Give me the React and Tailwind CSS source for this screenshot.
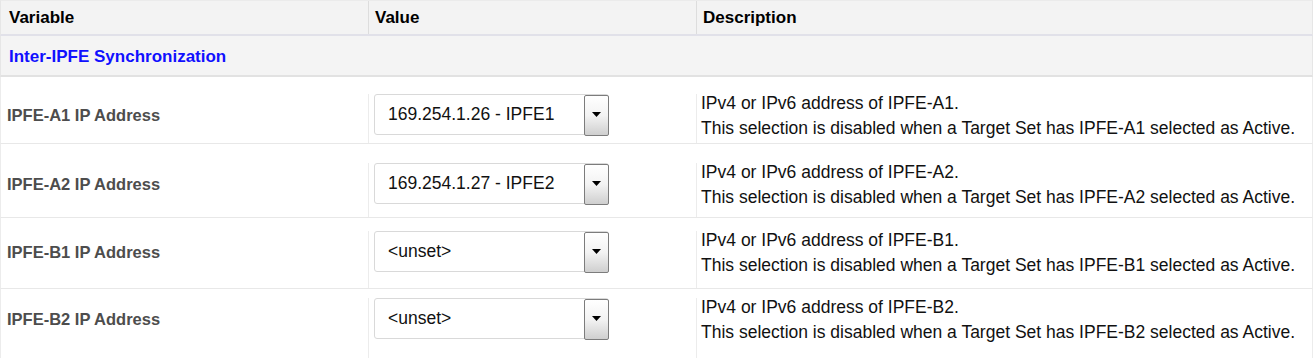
import React from "react";

const rows = [
  {
    label: "IPFE-A1 IP Address",
    value: "169.254.1.26 - IPFE1",
    id: "IPFE-A1",
    box: "h-[67px] pt-[17px]",
  },
  {
    label: "IPFE-A2 IP Address",
    value: "169.254.1.27 - IPFE2",
    id: "IPFE-A2",
    box: "h-[74px] pt-[19px]",
  },
  {
    label: "IPFE-B1 IP Address",
    value: "<unset>",
    id: "IPFE-B1",
    box: "h-[71px] pt-[13px]",
  },
  {
    label: "IPFE-B2 IP Address",
    value: "<unset>",
    id: "IPFE-B2",
    box: "h-[71px] pt-[9px]",
  },
];

function FakeSelect({ value }) {
  return (
    <div className="relative w-[235px] h-[41px] bg-white border border-[#d9d9d9] rounded-[3px] flex items-center pl-[13px] text-[17.5px] text-[#111]">
      <span>{value}</span>
      {/* dropdown button */}
      <div className="absolute right-[-1px] top-[0px] w-[25px] h-[41px] border border-[#7c7c7c] rounded-[2px] bg-gradient-to-b from-white via-[#f3f3f3] to-[#cfcfcf] flex items-center justify-center">
        <svg width="9" height="5" viewBox="0 0 9 5" className="mb-[2px]">
          <path d="M0 0 H9 L4.5 5 Z" fill="#000" />
        </svg>
      </div>
    </div>
  );
}

export default function App() {
  return (
    <div className="w-[1313px] bg-white font-['Liberation_Sans',Arial,sans-serif]">
      {/* HEADER */}
      <div className="grid grid-cols-[368px_328px_1fr] h-[36px] bg-[#f3f3f3] border-t border-[#ebebeb] border-b-2 border-b-[#e1e1e9] border-l border-l-[#e6e6e6] border-r border-r-[#e6e6e6]">
        <div className="flex items-center pl-[8px] pt-[1px] border-r border-[#dddddd] font-bold text-[17px] text-black">
          Variable
        </div>
        <div className="flex items-center pl-[6px] pt-[1px] border-r border-[#dddddd] font-bold text-[17px] text-black">
          Value
        </div>
        <div className="flex items-center pl-[6px] pt-[1px] font-bold text-[17px] text-black">
          Description
        </div>
      </div>

      {/* SECTION */}
      <div className="h-[41px] bg-[#f4f4f4] border-b-2 border-[#e2e2e2] border-x border-x-[#e6e6e6] flex items-center pl-[8px] pt-[3px] font-bold text-[17px] text-[#1010ff]">
        Inter-IPFE Synchronization
      </div>

      {/* ROWS */}
      {rows.map((r) => (
        <div
          key={r.id}
          className={`grid grid-cols-[368px_328px_1fr] border-b border-[#e8e8e8] border-x border-x-[#ececec] ${r.box}`}
        >
          <div className="border-r border-[#ececec] pl-[6px]">
            <div className="h-[41px] pt-[1px] flex items-center font-bold text-[16.5px] text-[#4d4d4d]">
              {r.label}
            </div>
          </div>
          <div className="border-r border-[#ececec] pl-[5px]">
            <FakeSelect value={r.value} />
          </div>
          <div className="pl-[4px]">
            <div className="h-[41px] pt-[3px] flex flex-col justify-center text-[17.5px] leading-[25px] text-[#111] whitespace-nowrap">
              <span>IPv4 or IPv6 address of {r.id}.</span>
              <span>
                This selection is disabled when a Target Set has {r.id} selected as Active.
              </span>
            </div>
          </div>
        </div>
      ))}
    </div>
  );
}
